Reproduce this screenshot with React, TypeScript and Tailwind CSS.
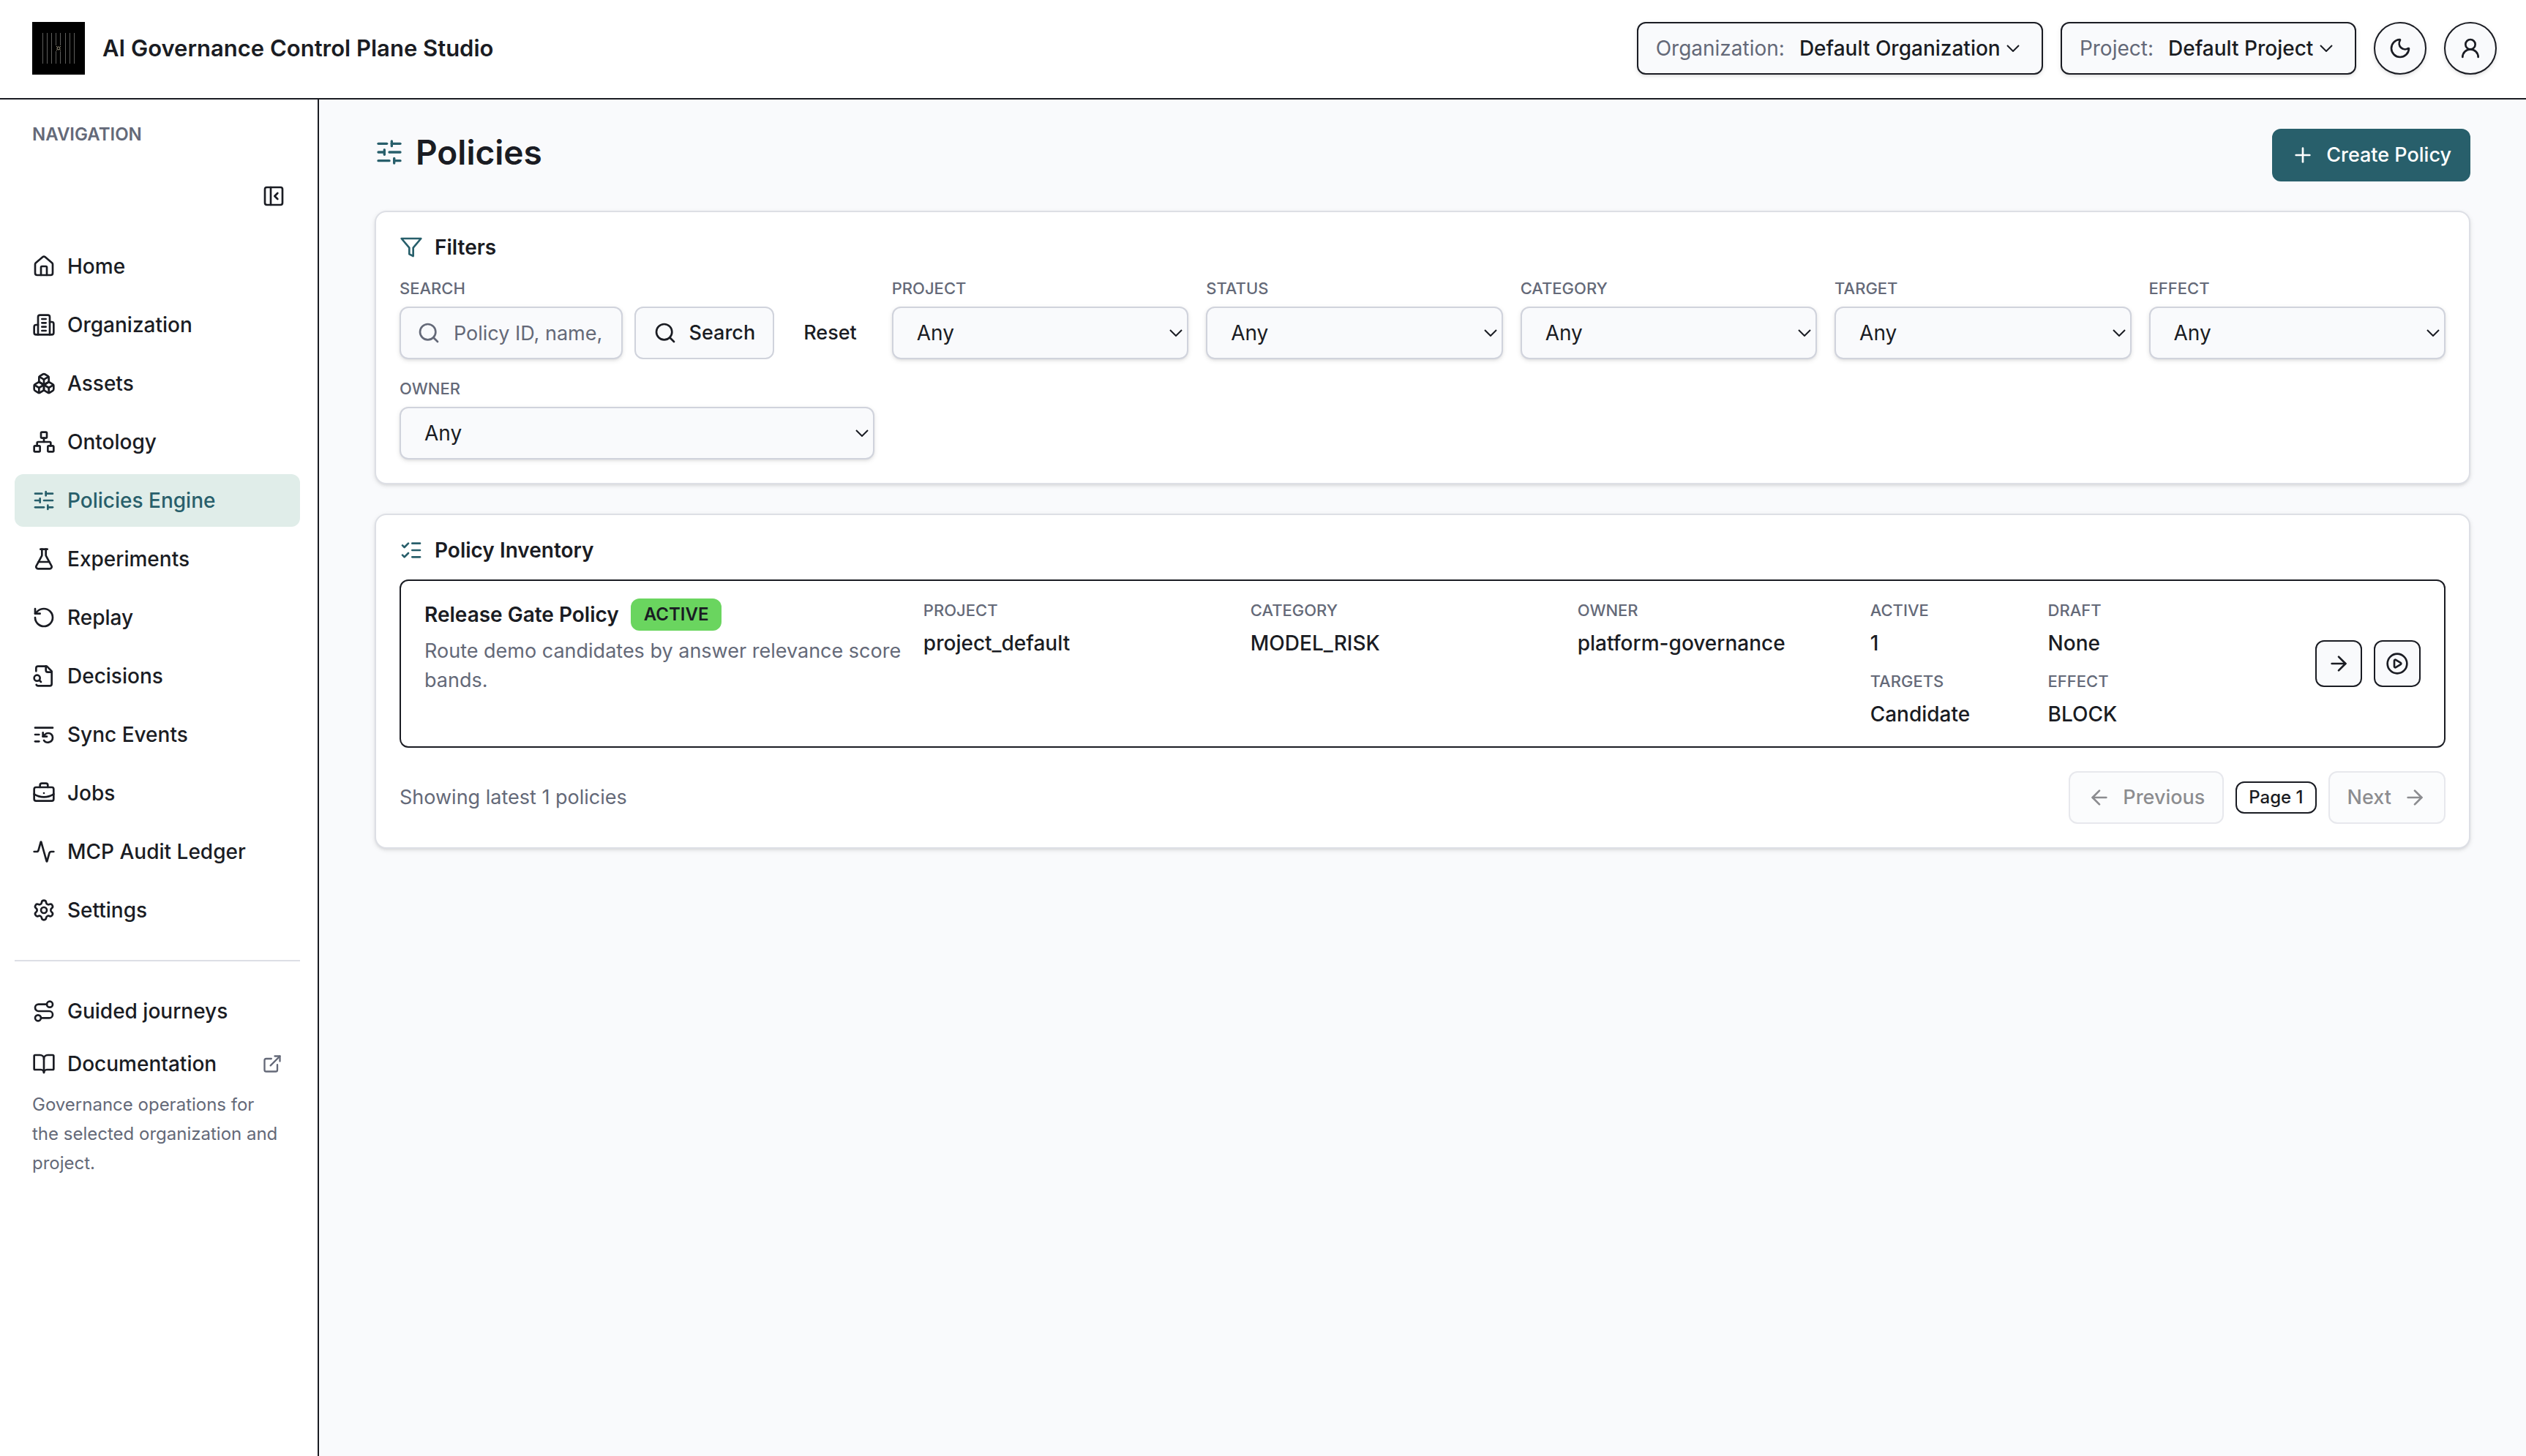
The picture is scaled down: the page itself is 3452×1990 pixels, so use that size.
import type { ComponentType, ReactNode } from "react";
import {
  Activity,
  ArrowLeft,
  ArrowRight,
  BookOpen,
  Boxes,
  BriefcaseBusiness,
  CirclePlay,
  ExternalLink,
  FlaskConical,
  House,
  ListChecks,
  ListRestart,
  Moon,
  Network,
  PanelLeftClose,
  Plus,
  RotateCcw,
  Route,
  Search,
  Settings,
  SlidersHorizontal,
  UserRound,
} from "lucide-react";

type Icon = ComponentType<{ className?: string }>;
type NavItem = { label: string; icon: Icon; active?: boolean };

function OfficeIcon({ className }: { className?: string }) {
  return (
    <svg viewBox="0 0 24 24" fill="none" stroke="currentColor" strokeWidth="2" strokeLinecap="round" strokeLinejoin="round" className={className}>
      <path d="M6 22V4a2 2 0 0 1 2-2h8a2 2 0 0 1 2 2v18Z" />
      <path d="M6 12H4a2 2 0 0 0-2 2v6a2 2 0 0 0 2 2h2" />
      <path d="M18 9h2a2 2 0 0 1 2 2v9a2 2 0 0 1-2 2h-2" />
      <path d="M10 6h4M10 10h4M10 14h4M10 18h4" />
    </svg>
  );
}

function DecisionIcon({ className }: { className?: string }) {
  return (
    <svg viewBox="0 0 24 24" fill="none" stroke="currentColor" strokeWidth="2" strokeLinecap="round" strokeLinejoin="round" className={className}>
      <path d="M14 2v4a2 2 0 0 0 2 2h4" />
      <path d="M4.268 21a2 2 0 0 0 1.727 1H18a2 2 0 0 0 2-2V7l-5-5H6a2 2 0 0 0-2 2v3" />
      <path d="m9 18-1.5-1.5" />
      <circle cx="5" cy="14" r="3" />
    </svg>
  );
}

function FilterIcon({ className }: { className?: string }) {
  return (
    <svg viewBox="0 0 24 24" fill="none" stroke="currentColor" strokeWidth="2" strokeLinecap="round" strokeLinejoin="round" className={className}>
      <polygon points="22 3 2 3 10 12.46 10 19 14 21 14 12.46 22 3" />
    </svg>
  );
}

const navItems: NavItem[] = [
  { label: "Home", icon: House },
  { label: "Organization", icon: OfficeIcon },
  { label: "Assets", icon: Boxes },
  { label: "Ontology", icon: Network },
  { label: "Policies Engine", icon: SlidersHorizontal, active: true },
  { label: "Experiments", icon: FlaskConical },
  { label: "Replay", icon: RotateCcw },
  { label: "Decisions", icon: DecisionIcon },
  { label: "Sync Events", icon: ListRestart },
  { label: "Jobs", icon: BriefcaseBusiness },
  { label: "MCP Audit Ledger", icon: Activity },
  { label: "Settings", icon: Settings },
];

const filters = ["Project", "Status", "Category", "Target", "Effect", "Owner"];

function Logo() {
  return (
    <svg viewBox="0 0 72 72" className="size-18 shrink-0" aria-hidden="true">
      <rect width="72" height="72" fill="#000" />
      <g stroke="#5e5e5c" strokeWidth="1">
        {[14.5, 20.5, 26.5, 45.5, 51.5, 57.5].map((x) => (
          <path key={x} d={`M${x} 15V57`} />
        ))}
        <path d="M32.5 15V32M32.5 40V57M38.5 15V32M38.5 40V57" />
      </g>
      <g fill="none" stroke="#a39c86" strokeWidth="1">
        <circle cx="36" cy="36" r="2" />
        <path d="M33 33l1 1M39 33l-1 1M33 39l1-1M39 39l-1-1" />
      </g>
    </svg>
  );
}

function Chevron({ className }: { className: string }) {
  return (
    <svg viewBox="0 0 18 10" fill="none" stroke="currentColor" strokeWidth="2" className={`pointer-events-none absolute h-[10px] w-[18px] ${className}`}>
      <path d="M1 1L9 9L17 1" />
    </svg>
  );
}

function ScopeSelect({ id, label, value }: { id: string; label: string; value: string }) {
  return (
    <div className="flex h-18 items-center gap-5 rounded-xl border-2 border-[#1a1c23] bg-[#f9fafc] px-6 shadow-[0_2px_6px_rgba(0,0,0,0.1),0_2px_4px_-2px_rgba(0,0,0,0.1)]">
      <label htmlFor={id} className="text-[#646978]">{label}:</label>
      <div className="relative flex items-center">
        <select id={id} className="appearance-none bg-transparent pr-8 font-medium">
          <option>{value}</option>
        </select>
        <Chevron className="right-1.5" />
      </div>
    </div>
  );
}

function NavLink({ item, children }: { item: NavItem; children?: ReactNode }) {
  return (
    <a
      href="#"
      aria-current={item.active ? "page" : undefined}
      className={`flex h-18 items-center gap-4 rounded-xl px-6 font-medium ${
        item.active ? "bg-[#e0ede9] text-[#285f6b]" : ""
      }`}
    >
      <item.icon className="size-8 shrink-0" />
      {item.label}
      {children}
    </a>
  );
}

function Panel({ title, icon: PanelIcon, children }: { title: string; icon: Icon; children: ReactNode }) {
  return (
    <section className="flex flex-col gap-6 rounded-2xl border-2 border-[#dddfe5] bg-white p-8 shadow-[0_2px_6px_rgba(0,0,0,0.1),0_2px_4px_-2px_rgba(0,0,0,0.1)]">
      <h2 className="flex items-center gap-4 leading-8 font-semibold">
        <PanelIcon className="size-8 text-[#285f6b]" />
        {title}
      </h2>
      {children}
    </section>
  );
}

function FilterSelect({ label }: { label: string }) {
  const id = `filter-${label.toLowerCase()}`;
  return (
    <div className="flex min-w-0 flex-col gap-2">
      <label htmlFor={id} className="text-[22px] leading-[33px] font-medium text-[#646978] uppercase">{label}</label>
      <div className="relative flex items-center">
        <select id={id} className="h-18 w-full appearance-none rounded-xl border-2 border-[#d0d3dc] bg-[#f9fafc] px-8 shadow-[0_2px_6px_rgba(0,0,0,0.1),0_2px_4px_-2px_rgba(0,0,0,0.1)]">
          <option>Any</option>
        </select>
        <Chevron className="right-2" />
      </div>
    </div>
  );
}

function Fact({ label, value }: { label: string; value: string }) {
  return (
    <div className="flex min-w-0 flex-col gap-2">
      <dt className="text-[22px] leading-[33px] font-medium text-[#646978] uppercase">{label}</dt>
      <dd className="font-medium">{value}</dd>
    </div>
  );
}

export default function App() {
  return (
    <div className="flex min-h-screen flex-col bg-[#f9fafc] font-[Inter,sans-serif] text-[28px] leading-10 text-[#1a1c23]">
      {/* Top bar */}
      <header className="flex items-center justify-between border-b-2 border-[#1a1c23] bg-white pt-[30px] pr-10 pb-8 pl-11">
        <div className="flex items-center gap-6">
          <Logo />
          <span className="text-[31px] font-semibold">AI Governance Control Plane Studio</span>
        </div>
        <div className="flex items-center gap-6">
          <ScopeSelect id="organization" label="Organization" value="Default Organization" />
          <ScopeSelect id="project" label="Project" value="Default Project" />
          <button aria-label="Toggle theme" className="flex size-18 items-center justify-center rounded-full border-2 border-[#1a1c23] bg-[#f9fafc] shadow-[0_2px_6px_rgba(0,0,0,0.1),0_2px_4px_-2px_rgba(0,0,0,0.1)]">
            <Moon className="size-8" />
          </button>
          <button aria-label="Account" className="flex size-18 items-center justify-center rounded-full border-2 border-[#1a1c23] bg-[#f9fafc] shadow-[0_2px_6px_rgba(0,0,0,0.1),0_2px_4px_-2px_rgba(0,0,0,0.1)]">
            <UserRound className="size-8" />
          </button>
        </div>
      </header>

      <div className="flex grow">
        {/* Sidebar */}
        <aside className="flex w-[436px] shrink-0 flex-col border-r-2 border-[#1a1c23] bg-white px-5 py-7 pr-6">
          <div className="px-6 text-2xl leading-10 font-semibold text-[#646978]">NAVIGATION</div>
          <button aria-label="Collapse navigation" className="mt-7 flex size-18 items-center justify-center self-end">
            <PanelLeftClose className="size-8" />
          </button>
          <nav className="mt-6 flex flex-col gap-2">
            {navItems.map((item) => (
              <NavLink key={item.label} item={item} />
            ))}
          </nav>
          <hr className="my-8 border-t-2 border-[#dddfe5]" />
          <NavLink item={{ label: "Guided journeys", icon: Route }} />
          <NavLink item={{ label: "Documentation", icon: BookOpen }}>
            <ExternalLink className="ml-auto size-7 text-[#646978]" />
          </NavLink>
          <p className="px-6 text-2xl leading-10 text-[#646978]">
            Governance operations for the selected organization and project.
          </p>
        </aside>

        <main className="flex min-w-0 grow flex-col gap-10 px-19 py-10">
          <div className="flex items-start justify-between">
            <h1 className="flex items-center gap-4 text-[46px] leading-16 font-semibold">
              <SlidersHorizontal className="size-10 text-[#285f6b]" />
              Policies
            </h1>
            <button className="flex h-18 items-center gap-4 rounded-xl border-2 border-[#285f6b] bg-[#285f6b] px-6 text-[27px] font-medium text-white">
              <Plus className="size-8" />
              Create Policy
            </button>
          </div>

          <Panel title="Filters" icon={FilterIcon}>
            <div className="grid grid-cols-[1.6fr_repeat(5,1fr)] gap-6">
              <div className="flex min-w-0 flex-col gap-2">
                <label htmlFor="filter-search" className="text-[22px] leading-[33px] font-medium text-[#646978] uppercase">Search</label>
                <div className="flex gap-4">
                  <div className="relative flex min-w-0 flex-1 items-center">
                    <Search className="pointer-events-none absolute left-6 size-8 text-[#646978]" />
                    <input
                      id="filter-search"
                      type="text"
                      placeholder="Policy ID, name,"
                      className="h-18 w-full rounded-xl border-2 border-[#d0d3dc] bg-[#f9fafc] pr-2 pl-18 text-[27px] shadow-[0_2px_6px_rgba(0,0,0,0.1),0_2px_4px_-2px_rgba(0,0,0,0.1)] placeholder:text-[#646978]"
                    />
                  </div>
                  <button className="flex h-18 items-center gap-4 rounded-xl border-2 border-[#d0d3dc] bg-[#f9fafc] px-6 text-[27px] font-medium">
                    <Search className="size-8" />
                    Search
                  </button>
                  <button className="h-18 px-6 text-[27px] font-medium">Reset</button>
                </div>
              </div>
              {filters.map((label) => (
                <FilterSelect key={label} label={label} />
              ))}
            </div>
          </Panel>

          <Panel title="Policy Inventory" icon={ListChecks}>
            <article className="grid grid-cols-[1.4fr_0.9fr_0.9fr_0.8fr_1fr_0.55fr] gap-6 rounded-xl border-2 border-[#1a1c23] px-8 py-6">
              <div className="flex flex-col gap-2">
                <div className="flex items-center gap-4">
                  <h3 className="font-semibold">Release Gate Policy</h3>
                  <span className="flex h-11 items-center rounded-xl bg-[#6ad55f] px-[18px] text-2xl font-semibold">ACTIVE</span>
                </div>
                <p className="text-[27px] text-[#646978]">Route demo candidates by answer relevance score bands.</p>
              </div>
              <dl><Fact label="Project" value="project_default" /></dl>
              <dl><Fact label="Category" value="MODEL_RISK" /></dl>
              <dl><Fact label="Owner" value="platform-governance" /></dl>
              <dl className="grid grid-cols-2 gap-4">
                <Fact label="Active" value="1" />
                <Fact label="Draft" value="None" />
                <Fact label="Targets" value="Candidate" />
                <Fact label="Effect" value="BLOCK" />
              </dl>
              <div className="flex items-center justify-end gap-4">
                <button aria-label="Open policy" className="flex size-16 items-center justify-center rounded-xl border-2 border-[#1a1c23] bg-[#f9fafc]">
                  <ArrowRight className="size-8" />
                </button>
                <button aria-label="Run policy" className="flex size-16 items-center justify-center rounded-xl border-2 border-[#1a1c23] bg-[#f9fafc]">
                  <CirclePlay className="size-8" />
                </button>
              </div>
            </article>

            <div className="mt-2 flex items-center justify-between">
              <p className="text-[27px] text-[#646978]">Showing latest 1 policies</p>
              <div className="flex items-center gap-4">
                <button disabled className="flex h-18 items-center gap-4 rounded-xl border-2 border-[#d0d3dc] bg-[#f9fafc] px-6 text-[27px] font-medium opacity-50">
                  <ArrowLeft className="size-8" />
                  Previous
                </button>
                <span className="flex h-11 items-center rounded-xl border-2 border-[#1a1c23] px-4 text-2xl font-medium">Page 1</span>
                <button disabled className="flex h-18 items-center gap-4 rounded-xl border-2 border-[#d0d3dc] bg-[#f9fafc] px-6 text-[27px] font-medium opacity-50">
                  Next
                  <ArrowRight className="size-8" />
                </button>
              </div>
            </div>
          </Panel>
        </main>
      </div>
    </div>
  );
}
